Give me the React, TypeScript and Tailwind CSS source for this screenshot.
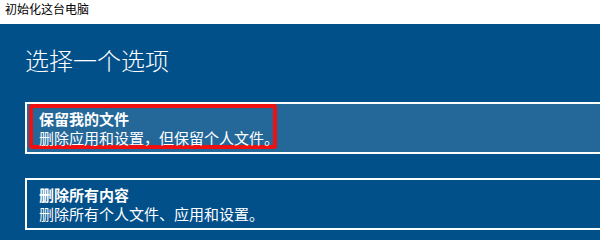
// Windows "Reset this PC" option picker. Title bar, heading, two option
// cards; the first one is selected and carries a red annotation box.

const font = { fontFamily: '"Noto Sans CJK SC", "Noto Sans", sans-serif' };

interface OptionProps {
  title: string;
  desc: string;
  selected?: boolean;
}

function OptionCard({ title, desc, selected }: OptionProps) {
  return (
    <div
      className={`relative -mr-4 ml-[25px] border-2 border-white pb-[5px] pl-3 pt-[5px] text-[15px] leading-[19px] text-white ${
        selected ? 'bg-[#246899]' : 'bg-[#02508a]'
      }`}
    >
      {selected && (
        <div className="absolute left-[2px] top-0 h-[45px] w-[248px] rounded-[3px] border-4 border-[#f01010]" />
      )}
      <div className="relative font-bold">{title}</div>
      <div className="relative">{desc}</div>
    </div>
  );
}

export default function App() {
  return (
    <div className="h-[240px] w-[600px] overflow-hidden bg-[#02508a]" style={font}>
      <div className="h-6 bg-white pl-[5px] text-[12px] leading-[18px] text-black">
        初始化这台电脑
      </div>

      <h1 className="pl-[25px] pt-5 text-[24px] font-light leading-8 text-white">
        选择一个选项
      </h1>

      <div className="mt-[26px] flex flex-col gap-6">
        <OptionCard
          selected
          title="保留我的文件"
          desc="删除应用和设置，但保留个人文件。"
        />
        <OptionCard title="删除所有内容" desc="删除所有个人文件、应用和设置。" />
      </div>
    </div>
  );
}
